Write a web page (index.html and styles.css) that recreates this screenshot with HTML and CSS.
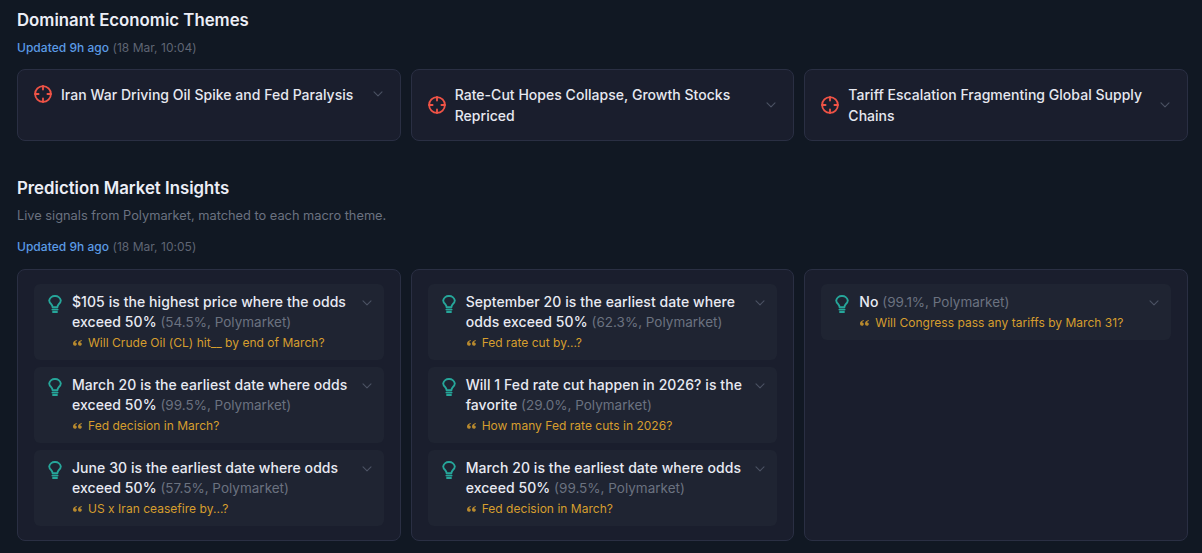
FILE: index.html
```html
<!DOCTYPE html>
<html lang="en">
<head>
<meta charset="utf-8">
<title>Dominant Economic Themes</title>
<link rel="stylesheet" href="styles.css">
</head>
<body>
<svg class="defs" width="0" height="0" aria-hidden="true">
  <defs>
    <symbol id="target" viewBox="0 0 18 18">
      <g fill="none" stroke="#ef5346" stroke-width="1.8" stroke-linecap="round">
        <circle cx="9" cy="9" r="7.9"/>
        <path d="M9 1v3.6M9 13.4V17M1 9h3.6M13.4 9H17"/>
      </g>
    </symbol>
    <symbol id="bulb" viewBox="0 0 14 18">
      <g fill="none" stroke="#26a69a" stroke-width="1.9" stroke-linecap="round" stroke-linejoin="round">
        <path d="M4.6 12.2c0-1.6-.7-2.3-1.7-3.4A5 5 0 0 1 1.2 5.5 5.6 5.6 0 0 1 7 1a5.6 5.6 0 0 1 5.8 4.5 5 5 0 0 1-1.7 3.3c-1 1.1-1.7 1.8-1.7 3.4z"/>
        <path d="M4.4 14.6h5.2M5 17h4"/>
      </g>
    </symbol>
    <symbol id="chev" viewBox="0 0 10 6">
      <path d="M1 .8 5 4.8 9 .8" fill="none" stroke="#4b5263" stroke-width="1.1" stroke-linecap="round" stroke-linejoin="round"/>
    </symbol>
    <symbol id="quote" viewBox="0 0 9 6">
      <path d="M3.8 0C1.6.4 0 1.6 0 3.6 0 5 .8 5.8 1.9 5.8S3.8 5 3.8 4 3.1 2.4 2 2.4c.2-.7.9-1.2 1.8-1.4zM8.8 0C6.6.4 5 1.6 5 3.6 5 5 5.8 5.8 6.9 5.8S8.8 5 8.8 4 8.1 2.4 7 2.4c.2-.7.9-1.2 1.8-1.4z" fill="#b7892e"/>
    </symbol>
  </defs>
</svg>
<main class="page">
  <section class="themes">
    <h2 class="title">Dominant Economic Themes</h2>
    <p class="updated"><span class="ago">Updated 9h ago</span> <span class="stamp">(18 Mar, 10:04)</span></p>
    <div class="grid">
      <article class="theme">
        <svg class="target"><use href="#target"/></svg>
        <h3 class="theme-name">Iran War Driving Oil Spike and Fed Paralysis</h3>
        <svg class="chev"><use href="#chev"/></svg>
      </article>
      <article class="theme">
        <svg class="target"><use href="#target"/></svg>
        <h3 class="theme-name">Rate-Cut Hopes Collapse, Growth Stocks Repriced</h3>
        <svg class="chev"><use href="#chev"/></svg>
      </article>
      <article class="theme">
        <svg class="target"><use href="#target"/></svg>
        <h3 class="theme-name">Tariff Escalation Fragmenting Global Supply Chains</h3>
        <svg class="chev"><use href="#chev"/></svg>
      </article>
    </div>
  </section>
  <section class="insights">
    <h2 class="title">Prediction Market Insights</h2>
    <p class="sub">Live signals from Polymarket, matched to each macro theme.</p>
    <p class="updated"><span class="ago">Updated 9h ago</span> <span class="stamp">(18 Mar, 10:05)</span></p>
    <div class="grid">
      <div class="panel">
        <article class="insight">
          <svg class="bulb"><use href="#bulb"/></svg>
          <div class="body">
            <p class="claim">$105 is the highest price where the odds exceed 50% <span class="meta">(54.5%, Polymarket)</span></p>
            <p class="source"><svg class="quote"><use href="#quote"/></svg>Will Crude Oil (CL) hit__ by end of March?</p>
          </div>
          <svg class="chev"><use href="#chev"/></svg>
        </article>
        <article class="insight">
          <svg class="bulb"><use href="#bulb"/></svg>
          <div class="body">
            <p class="claim">March 20 is the earliest date where odds exceed 50% <span class="meta">(99.5%, Polymarket)</span></p>
            <p class="source"><svg class="quote"><use href="#quote"/></svg>Fed decision in March?</p>
          </div>
          <svg class="chev"><use href="#chev"/></svg>
        </article>
        <article class="insight">
          <svg class="bulb"><use href="#bulb"/></svg>
          <div class="body">
            <p class="claim">June 30 is the earliest date where odds exceed 50% <span class="meta">(57.5%, Polymarket)</span></p>
            <p class="source"><svg class="quote"><use href="#quote"/></svg>US x Iran ceasefire by...?</p>
          </div>
          <svg class="chev"><use href="#chev"/></svg>
        </article>
      </div>
      <div class="panel">
        <article class="insight">
          <svg class="bulb"><use href="#bulb"/></svg>
          <div class="body">
            <p class="claim">September 20 is the earliest date where odds exceed 50% <span class="meta">(62.3%, Polymarket)</span></p>
            <p class="source"><svg class="quote"><use href="#quote"/></svg>Fed rate cut by...?</p>
          </div>
          <svg class="chev"><use href="#chev"/></svg>
        </article>
        <article class="insight">
          <svg class="bulb"><use href="#bulb"/></svg>
          <div class="body">
            <p class="claim">Will 1 Fed rate cut happen in 2026? is the favorite <span class="meta">(29.0%, Polymarket)</span></p>
            <p class="source"><svg class="quote"><use href="#quote"/></svg>How many Fed rate cuts in 2026?</p>
          </div>
          <svg class="chev"><use href="#chev"/></svg>
        </article>
        <article class="insight">
          <svg class="bulb"><use href="#bulb"/></svg>
          <div class="body">
            <p class="claim">March 20 is the earliest date where odds exceed 50% <span class="meta">(99.5%, Polymarket)</span></p>
            <p class="source"><svg class="quote"><use href="#quote"/></svg>Fed decision in March?</p>
          </div>
          <svg class="chev"><use href="#chev"/></svg>
        </article>
      </div>
      <div class="panel">
        <article class="insight">
          <svg class="bulb"><use href="#bulb"/></svg>
          <div class="body">
            <p class="claim">No <span class="meta">(99.1%, Polymarket)</span></p>
            <p class="source"><svg class="quote"><use href="#quote"/></svg>Will Congress pass any tariffs by March 31?</p>
          </div>
          <svg class="chev"><use href="#chev"/></svg>
        </article>
      </div>
    </div>
  </section>
</main>
</body>
</html>
```
FILE: styles.css
```css
* { box-sizing: border-box; margin: 0; padding: 0; }
html, body { height: 100%; overflow: hidden; }
body {
  background: #111823;
  color: #e8eaf2;
  font-family: Inter, "Liberation Sans", sans-serif;
}
.defs { position: absolute; }
.page { padding: 10px 14px 0 17px; display: flex; flex-direction: column; gap: 37px; }
.title { font-size: 16.8px; font-weight: 600; line-height: 21px; color: #eceef6; }
.updated { font-size: 12px; line-height: 16px; margin-top: 9px; letter-spacing: .03px; }
.ago { color: #5b9be6; font-weight: 500; }
.stamp { color: #5f6573; }
.sub { font-size: 12.8px; line-height: 16px; margin-top: 9px; color: #6b7280; }
.insights .updated { margin-top: 15px; }
.grid { display: grid; grid-template-columns: repeat(3, 1fr); gap: 10px; margin-top: 13px; }
.insights .grid { margin-top: 14px; }
.theme {
  display: flex;
  align-items: center;
  align-self: stretch;
  gap: 9px;
  padding: 14px 16px;
  background: #1a1e2d;
  border: 1px solid #2a2f43;
  border-radius: 8px;
}
.theme:first-child { align-items: flex-start; }
.target { width: 18px; height: 18px; flex: none; }
.theme:first-child .target { margin-top: 1px; }
.theme-name { flex: 1; font-size: 14px; font-weight: 500; line-height: 21px; letter-spacing: .03px; color: #e6e8f0; }
.chev { width: 10px; height: 6px; flex: none; margin-right: 1px; }
.theme:first-child .chev { margin-top: 7px; }
.panel {
  height: 272px;
  display: flex;
  flex-direction: column;
  gap: 7px;
  padding: 14px 16px;
  background: #1a1e2d;
  border: 1px solid #2a2f43;
  border-radius: 8px;
}
.insight {
  display: flex;
  align-items: flex-start;
  gap: 9px;
  padding: 8.4px 12px 9px 14px;
  background: #1f2432;
  border-radius: 6px;
}
.bulb { width: 14px; height: 18px; flex: none; margin-top: 2.6px; margin-right: 1px; }
.body { flex: 1; min-width: 0; }
.claim { font-size: 14px; font-weight: 500; line-height: 19.6px; letter-spacing: .07px; color: #e8eaf2; }
.meta { font-size: 13.5px; line-height: 1; font-weight: 400; letter-spacing: 0; color: #6b7280; }
.source { display: flex; align-items: center; font-size: 12px; line-height: 16px; margin-top: 3.4px; letter-spacing: .03px; color: #d69e2e; }
.quote { width: 9px; height: 6px; flex: none; margin: 0 6px 0 1px; }
.insight .chev { margin: 7.6px 0 0 4px; }
```
